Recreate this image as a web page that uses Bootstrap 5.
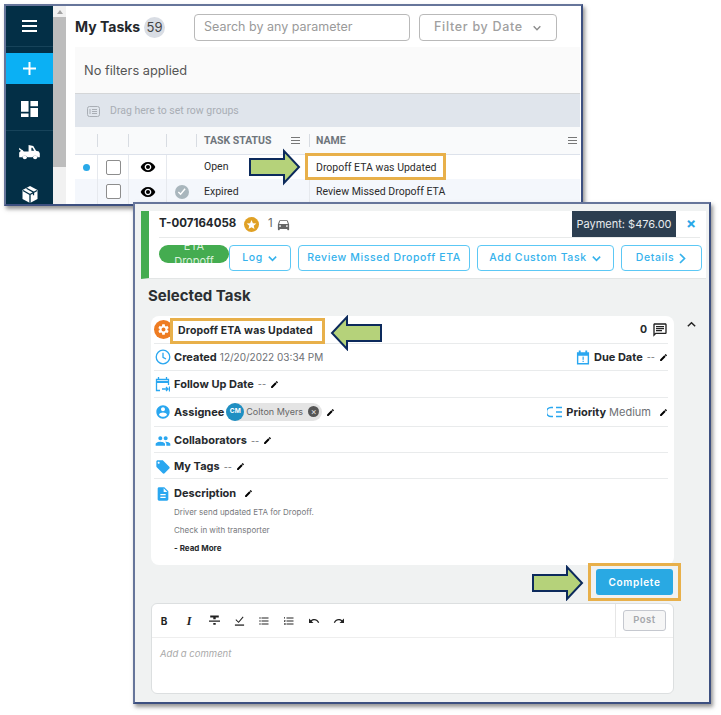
<!DOCTYPE html>
<html lang="en">
<head>
    <meta charset="UTF-8">
    <meta name="viewport" content="width=device-width, initial-scale=1.0">
    <title>My Tasks</title>
    <link href="https://cdn.jsdelivr.net/npm/bootstrap@5.3.0/dist/css/bootstrap.min.css" rel="stylesheet">
    <style>
        html, body { height: 100%; }
        body { background: #fff; position: relative; overflow: hidden; font-family: Inter, "Liberation Sans", sans-serif; color: #23272b; }
        svg { display: block; flex: none; }
        .shot { position: absolute; background: #fff; border: 2px solid #66759a; border-right-color: #3d5080; border-bottom-color: #3d5080; box-shadow: 2px 3px 4px rgba(60,60,60,.55); overflow: hidden; }
        .shot-tasks { left: 4px; top: 4px; width: 579px; height: 202px; z-index: 1; }
        .shot-detail { left: 133px; top: 202px; width: 578px; height: 502px; z-index: 2; background: #f0f2f2; }

        /* left menu */
        .side { width: 47px; background: #032f46; flex: none; }
        .side-item { display: flex; align-items: center; justify-content: center; border-bottom: 1px solid #17435a; }
        .side-menu { height: 41px; margin-bottom: 6px; }
        .side-add { height: 31px; background: #0bb0f4; border: 0; margin-bottom: 1px; }
        .side-dash { height: 46px; padding-top: 3px; }
        .side-truck { height: 42px; border: 0; }
        .side-box { height: 31px; border: 0; padding-top: 12px; }
        .scroll-track { width: 13px; background: #f1f1f1; flex: none; padding-top: 4px; }
        .scroll-arrow { width: 0; height: 0; margin: 0 auto 3px; border: 3px solid transparent; border-top: 0; border-bottom: 4px solid #a3a3a3; }
        .scroll-thumb { height: 150px; background: #bdbdbd; }
        .task-main { width: 514px; padding-left: 9px; flex: none; }

        .task-top { height: 41px; padding-top: 7px; }
        .task-title { font-size: 14px; font-weight: 700; width: 69px; height: 27px; white-space: nowrap; }
        .count-dot { width: 21px; height: 21px; border-radius: 50%; background: #d9dde4; font-size: 13px; color: #444; display: flex; align-items: center; justify-content: center; margin-right: 29px; }
        .search-box { width: 216px; height: 27px; margin-top: 1px; border: 1px solid #b9b9b9; border-radius: 4px; font-size: 12.5px; color: #9a9a9a; padding: 0 9px; margin-right: 9px; display: flex; align-items: center; }
        .date-box { width: 138px; height: 27px; margin-top: 1px; border: 1px solid #b9b9b9; border-radius: 4px; font-size: 12.5px; color: #a0a0a0; padding: 0 14px; display: flex; align-items: center; justify-content: space-between; font-weight: 500; letter-spacing: .7px; }
        .filter-strip { height: 46px; background: #fafafa; font-size: 12.8px; color: #555; padding: 2px 9px 0; display: flex; align-items: center; width: 505px; }
        .group-bar { height: 34px; background: #e0e5ec; border-top: 1px solid #d4d6d8; width: 505px; font-family: Roboto, sans-serif; font-size: 10.5px; color: #a9aeb5; padding: 1px 0 0 12px; gap: 10px; display: flex; align-items: center; }
        .grid-row { display: flex; width: 505px; font-family: Roboto, sans-serif; font-size: 10.5px; color: #2c2c2c; }
        .grid-head { height: 28px; background: #f9fafb; border-bottom: 1px solid #dde2eb; color: #6f757b; font-weight: 700; }
        .grid-open { height: 24px; background: #fff; }
        .grid-expired { height: 25px; background: #f4f7fc; }
        .cell { display: flex; align-items: center; flex: none; border-left: 1px solid #e6e9ee; }
        .grid-head .cell { border-left-color: transparent; position: relative; }
        .grid-head .cell + .cell::before { content: ""; position: absolute; left: -1px; top: 7px; height: 13px; width: 1px; background: #d8dce2; }
        .c1 { width: 22px; border-left: 0; justify-content: center; }
        .c2 { width: 31px; justify-content: center; }
        .c3 { width: 38px; justify-content: center; }
        .c4 { width: 30px; justify-content: center; }
        .c5 { width: 113px; padding: 0 9px 0 7px; justify-content: space-between; }
        .c6 { width: 271px; padding: 0 3px 0 6px; justify-content: space-between; }
        .grid-open .c5, .grid-expired .c5 { border-left-color: transparent; }
        .unread { width: 7px; height: 7px; border-radius: 50%; background: #29a9e8; }
        .fake-check { width: 15px; height: 15px; border: 1px solid #8d8d8d; border-radius: 2px; background: #fff; }
        .done-dot { width: 14px; height: 14px; border-radius: 50%; background: #a9b6bd; display: flex; align-items: center; justify-content: center; }
        .head-lines { width: 9px; height: 7px; border-top: 1px solid #777; border-bottom: 1px solid #777; position: relative; }
        .head-lines::after { content: ""; position: absolute; left: 0; right: 0; top: 2px; height: 1px; background: #777; }

        /* callouts */
        .hilite { border: 3px solid #e8b04a; background: #fff; }
        .hilite-name { position: absolute; left: 299px; top: 147px; width: 141px; height: 27px; z-index: 1; font-family: Roboto, sans-serif; font-size: 10.5px; color: #2c2c2c; padding: 2px 0 0 8px; display: flex; align-items: center; }
        .arrow { position: absolute; z-index: 3; }

        /* detail window */
        .head-card { margin: 7px 3px 0 6px; height: 68px; background: #fff; border-left: 8px solid #44ac50; padding-left: 10px; border-bottom: 1px solid #e3e6e6; position: relative; }
        .head-top { height: 27px; border-bottom: 1px solid #e8eaea; margin-right: 6px; }
        .task-no { font-size: 11.5px; font-weight: 700; width: 85px; white-space: nowrap; }
        .star-dot { width: 15px; height: 15px; border-radius: 50%; background: #e0a125; display: flex; align-items: center; justify-content: center; margin-right: 9px; }
        .car-num { font-size: 11.5px; color: #666; margin-right: 3px; }
        .pay-box { position: absolute; left: 423px; top: 0; width: 104px; height: 26px; background: #2c3e50; color: #e8ebee; font-size: 11px; display: flex; align-items: center; justify-content: center; white-space: nowrap; }
        .close-x { position: absolute; left: 537px; top: 5px; font-size: 15px; line-height: 16px; font-weight: 700; color: #2aa7e8; }
        .head-btns { padding-top: 7px; gap: 7px; }
        .eta-pill { width: 70px; height: 18px; border-radius: 9px; background: #44ac50; color: #d9f0dc; font-size: 11px; line-height: 15px; text-align: center; overflow: hidden; margin-right: -7px; flex: none; display: flex; align-items: center; justify-content: center; }
        .btn-line { height: 26px; border: 1px solid #5cc8f5; border-radius: 4px; background: #fff; color: #35b2ec; font-size: 10.5px; font-weight: 500; letter-spacing: .6px; display: flex; align-items: center; justify-content: center; gap: 4px; flex: none; padding: 0; white-space: nowrap; }
        .w-log { width: 62px; }
        .w-review { width: 172px; }
        .w-custom { width: 137px; }
        .w-details { width: 81px; }
        .sel-title { font-size: 15px; font-weight: 700; color: #2b2f33; margin: 4px 0 7px 13px; height: 26px; }
        .body-wrap { padding-left: 16px; }
        .info-card { width: 523px; height: 249px; background: #fff; border-radius: 8px; padding: 0 6px 0 3px; flex: none; }
        .collapse-up { width: 34px; padding-top: 3px; }
        .info-row { border-bottom: 1px solid #e9ebec; font-size: 11px; font-weight: 700; color: #26292c; white-space: nowrap; padding-left: 1px; }
        .r1 { height: 28px; position: relative; }
        .r2 { height: 27px; }
        .r3 { height: 27px; }
        .r4 { height: 29px; }
        .r5 { height: 26px; padding-top: 2px; }
        .r6 { height: 26px; padding-top: 2px; }
        .r7 { height: 27px; font-size: 11px; font-weight: 700; color: #26292c; padding: 2px 0 0 1px; }
        .info-ico { width: 15px; margin-right: 4px; display: flex; justify-content: center; }
        .val { font-weight: 400; color: #6d6f74; margin-left: 3px; }
        .val-date { font-size: 10px; }
        .val-dash { font-size: 9px; margin-left: 4px; }
        .pen { margin-left: 4px; }
        .gear-dot { width: 19px; height: 19px; border-radius: 50%; background: #ee7c22; display: flex; align-items: center; justify-content: center; margin-left: -1px; flex: none; }
        .hilite-task { position: absolute; left: 16px; top: 2px; width: 155px; height: 26px; z-index: 1; font-size: 10.5px; padding-left: 5px; display: flex; align-items: center; letter-spacing: .15px; }
        .cnt { font-size: 10.5px; margin-right: 1px; }
        .person-chip { display: flex; align-items: center; background: #e4e4e4; border-radius: 10px; height: 18px; width: 96px; margin-left: 2px; font-weight: 400; font-size: 9px; color: #666; position: relative; }
        .person-av { width: 18px; height: 18px; border-radius: 50%; background: #1f8fc2; color: #fff; font-size: 6.5px; font-weight: 700; display: flex; align-items: center; justify-content: center; margin-right: 2px; flex: none; }
        .chip-x { position: absolute; right: 3px; top: 3px; width: 11px; height: 11px; border-radius: 50%; background: #555; color: #e4e4e4; font-size: 9px; line-height: 11px; text-align: center; }
        .desc-block { padding: 1px 0 0 20px; font-size: 8px; color: #77797d; }
        .desc-block p { margin: 0 0 8px; line-height: 10px; }
        .read-more { font-weight: 700; color: #26292c; }
        .finish-row { height: 38px; position: relative; }
        .hilite-done { position: absolute; left: 453px; top: -2px; width: 93px; height: 38px; display: flex; align-items: center; justify-content: center; background: #f0f2f2; }
        .btn-done { width: 77px; height: 26px; background: #29a9e3; border: 0; border-radius: 3px; color: #fff; font-size: 10px; font-weight: 600; letter-spacing: .7px; padding: 0; }
        .comment-box { margin-left: 16px; width: 523px; height: 91px; background: #fff; border: 1px solid #dcdfe0; border-radius: 6px; flex: none; }
        .tool-row { height: 34px; border-bottom: 1px solid #eeeeee; padding-left: 5px; gap: 11px; }
        .tool-ico { width: 14px; display: flex; justify-content: center; font-size: 10px; font-weight: 700; color: #222; line-height: 14px; }
        .tool-serif { font-family: "Liberation Serif", serif; font-size: 12px; font-style: italic; }
        .post-wrap { border-left: 1px solid #e6e6e6; height: 33px; width: 58px; margin-left: auto; display: flex; align-items: center; padding-left: 7px; }
        .post-btn { width: 43px; height: 21px; border: 1px solid #c5c8cf; border-radius: 3px; background: #f6f6f6; color: #a5a7ac; font-size: 9.5px; font-weight: 600; letter-spacing: .5px; padding: 0; }
        .comment-hint { font-size: 9.5px; font-style: italic; color: #a9a9a9; padding: 9px 0 0 8px; }
    </style>
</head>
<body>
    <svg width="0" height="0" class="position-absolute">
        <symbol id="i-pen" viewBox="0 0 24 24"><path d="M3 17.25V21h3.75L17.81 9.94l-3.75-3.75L3 17.25zM20.71 7.04a1 1 0 0 0 0-1.41l-2.34-2.34a1 1 0 0 0-1.41 0l-1.83 1.83 3.75 3.75 1.83-1.83z"/></symbol>
        <symbol id="i-eye" viewBox="0 0 24 24"><path d="M12 4.5C7 4.5 2.73 7.61 1 12c1.73 4.39 6 7.5 11 7.5s9.27-3.11 11-7.5c-1.73-4.39-6-7.5-11-7.5zM12 17c-2.76 0-5-2.24-5-5s2.24-5 5-5 5 2.24 5 5-2.24 5-5 5zm0-8c-1.66 0-3 1.34-3 3s1.34 3 3 3 3-1.34 3-3-1.34-3-3-3z"/></symbol>
        <symbol id="i-down" viewBox="0 0 12 12"><path d="M2 4l4 4 4-4" fill="none" stroke="currentColor" stroke-width="1.7"/></symbol>
    </svg>

    <!-- back window: task list -->
    <div class="shot shot-tasks d-flex">
        <div class="side">
            <div class="side-item side-menu">
                <svg width="15" height="12" viewBox="0 0 15 12" fill="#fff"><rect width="15" height="2"/><rect y="5" width="15" height="2"/><rect y="10" width="15" height="2"/></svg>
            </div>
            <div class="side-item side-add">
                <svg width="13" height="13" viewBox="0 0 13 13" fill="#fff"><rect x="5.5" width="2" height="13"/><rect y="5.5" width="13" height="2"/></svg>
            </div>
            <div class="side-item side-dash">
                <svg width="17" height="16" viewBox="3 3 18 18" preserveAspectRatio="none" fill="#fff"><path d="M3 15h8V3H3v12zm0 6h8v-4H3v4zm10 0h8V11h-8v10zm0-18v6h8V3h-8z"/></svg>
            </div>
            <div class="side-item side-truck">
                <svg width="21" height="15" viewBox="0 0 22 16" fill="#fff"><path d="M10 0l5 1 3 5 3 1 1 2v4h-2.200a3 3 0 0 0-5.600 0H8.800a3 3 0 0 0-5.600 0H0V8l3-3 2 2h5z"/><path d="M13 3v3h3l-1.800-3z" fill="#032f46"/><circle cx="6" cy="13" r="2.200"/><circle cx="17" cy="13" r="2.200"/><path d="M0 3l4 3-1 1-3-2z"/></svg>
            </div>
            <div class="side-item side-box">
                <svg width="18" height="19" viewBox="0 0 18 19"><path d="M9 1l7.500 4v9L9 18l-7.500-4V5z" fill="#fff"/><path d="M2 5.500L9 9.500l7-4M9 9.500V18M5.500 3.200l7 4v3" fill="none" stroke="#032f46" stroke-width="1.300"/></svg>
            </div>
        </div>
        <div class="scroll-track">
            <div class="scroll-arrow"></div>
            <div class="scroll-thumb"></div>
        </div>
        <div class="task-main position-relative">
            <div class="task-top d-flex align-items-start">
                <div class="task-title d-flex align-items-center">My Tasks</div>
                <div class="count-dot mt-1">59</div>
                <div class="search-box">Search by any parameter</div>
                <div class="date-box">Filter by Date <svg width="10" height="10" style="color:#8c8c8c"><use href="#i-down"/></svg></div>
            </div>
            <div class="filter-strip">No filters applied</div>
            <div class="group-bar">
                <svg width="13" height="13" viewBox="0 0 13 13" fill="none" stroke="#a9aeb5"><rect x=".5" y="1.500" width="12" height="10" rx="2"/><path d="M5 4.500h5M5 6.500h5M5 8.500h5M3 4v5"/></svg>
                Drag here to set row groups
            </div>
            <div class="grid-row grid-head">
                <div class="cell c1"></div><div class="cell c2"></div><div class="cell c3"></div><div class="cell c4"></div>
                <div class="cell c5">TASK STATUS <span class="head-lines"></span></div>
                <div class="cell c6">NAME <span class="head-lines"></span></div>
            </div>
            <div class="grid-row grid-open">
                <div class="cell c1"><span class="unread"></span></div>
                <div class="cell c2"><span class="fake-check"></span></div>
                <div class="cell c3"><svg width="16" height="16"><use href="#i-eye"/></svg></div>
                <div class="cell c4"></div>
                <div class="cell c5">Open</div>
                <div class="cell c6"></div>
            </div>
            <div class="grid-row grid-expired">
                <div class="cell c1"></div>
                <div class="cell c2"><span class="fake-check"></span></div>
                <div class="cell c3"><svg width="16" height="16"><use href="#i-eye"/></svg></div>
                <div class="cell c4"><span class="done-dot"><svg width="9" height="9" viewBox="0 0 10 10"><path d="M1.500 5.500l2.500 2.500 5-6" fill="none" stroke="#fff" stroke-width="1.600"/></svg></span></div>
                <div class="cell c5">Expired</div>
                <div class="cell c6">Review Missed Dropoff ETA</div>
            </div>
        </div>
        <div class="hilite hilite-name">Dropoff ETA was Updated</div>
    </div>

    <!-- front window: task details -->
    <div class="shot shot-detail">
        <div class="head-card">
            <div class="head-top d-flex align-items-center">
                <span class="task-no">T-007164058</span>
                <span class="star-dot"><svg width="11" height="11" viewBox="0 0 24 24" fill="#fff"><path d="M12 2l3 7 7.500.6-5.700 4.900 1.800 7.300L12 18l-6.600 3.800 1.800-7.300L1.500 9.600 9 9z"/></svg></span>
                <span class="car-num">1</span>
                <svg width="15" height="15" viewBox="0 0 24 24" fill="#666"><path d="M18.920 6.010C18.720 5.420 18.160 5 17.500 5h-11c-.66 0-1.210.42-1.420 1.010L3 12v8c0 .55.45 1 1 1h1c.55 0 1-.45 1-1v-1h12v1c0 .55.45 1 1 1h1c.55 0 1-.45 1-1v-8l-2.080-5.990zM6.500 16c-.83 0-1.500-.67-1.500-1.500S5.670 13 6.500 13s1.500.67 1.500 1.500S7.330 16 6.500 16zm11 0c-.83 0-1.500-.67-1.500-1.500s.67-1.500 1.500-1.500 1.500.67 1.500 1.500-.67 1.500-1.500 1.500zM5 11l1.500-4.500h11L19 11H5z"/></svg>
            </div>
            <div class="pay-box">Payment: $476.00</div>
            <div class="close-x">×</div>
            <div class="head-btns d-flex">
                <div class="eta-pill">ETA<br>Dropoff</div>
                <button class="btn-line w-log">Log <svg width="11" height="11"><use href="#i-down"/></svg></button>
                <button class="btn-line w-review">Review Missed Dropoff ETA</button>
                <button class="btn-line w-custom">Add Custom Task <svg width="11" height="11"><use href="#i-down"/></svg></button>
                <button class="btn-line w-details">Details <svg width="9" height="11" viewBox="0 0 9 11"><path d="M2 1l4.500 4.500L2 10" fill="none" stroke="currentColor" stroke-width="1.700"/></svg></button>
            </div>
        </div>
        <div class="sel-title d-flex align-items-center">Selected Task</div>
        <div class="d-flex body-wrap">
            <div class="info-card">
                <div class="info-row r1 d-flex align-items-center justify-content-between">
                    <span class="gear-dot"><svg width="13" height="13" viewBox="0 0 24 24" fill="#fff"><path d="M19.140 12.940c.04-.3.06-.61.06-.94 0-.32-.02-.64-.07-.94l2.030-1.580c.18-.14.23-.41.12-.61l-1.920-3.320c-.12-.22-.37-.29-.59-.22l-2.390.96c-.5-.38-1.030-.7-1.620-.94l-.36-2.540c-.04-.24-.24-.41-.48-.41h-3.840c-.24 0-.43.17-.47.41l-.36 2.540c-.59.24-1.130.57-1.620.94l-2.390-.96c-.22-.08-.47 0-.59.22L2.740 8.870c-.12.21-.08.47.12.61l2.030 1.580c-.05.3-.09.63-.09.94s.02.64.07.94l-2.030 1.580c-.18.14-.23.41-.12.61l1.920 3.320c.12.22.37.29.59.22l2.390-.96c.5.38 1.030.7 1.620.94l.36 2.540c.05.24.24.41.48.41h3.840c.24 0 .44-.17.47-.41l.36-2.540c.59-.24 1.130-.56 1.620-.94l2.390.96c.22.08.47 0 .59-.22l1.920-3.320c.12-.22.07-.47-.12-.61l-2.010-1.580zM12 15.600c-1.980 0-3.600-1.620-3.600-3.600s1.620-3.600 3.600-3.600 3.600 1.620 3.600 3.600-1.620 3.600-3.600 3.600z"/></svg></span>
                    <span class="hilite hilite-task">Dropoff ETA was Updated</span>
                    <span class="d-flex align-items-center gap-1"><span class="cnt">0</span><svg width="16" height="16" viewBox="0 0 24 24" fill="#222"><path d="M20 2H4c-1.100 0-2 .9-2 2v18l4-4h14c1.100 0 2-.9 2-2V4c0-1.100-.9-2-2-2zm0 14H5.170L4 17.170V4h16v12zM6 12h9v2H6zm0-3h12v2H6zm0-3h12v2H6z"/></svg></span>
                </div>
                <div class="info-row r2 d-flex align-items-center justify-content-between">
                    <span class="d-flex align-items-center"><span class="info-ico"><svg width="16" height="16" viewBox="0 0 16 16" fill="none" stroke="#2aa7f0" stroke-width="1.300"><circle cx="8" cy="8" r="6.800"/><path d="M8 3.800V8.300l3 1.700"/></svg></span>Created <span class="val val-date">12/20/2022 03:34 PM</span></span>
                    <span class="d-flex align-items-center"><svg class="me-1" width="14" height="15" viewBox="0 0 15 15" fill="#2aa7f0"><path d="M1 2h2V0h2v2h5V0h2v2h2v13H1zm1.500 3.500v8h10v-8z"/><rect x="7" y="6.500" width="1.300" height="3.500"/><rect x="7" y="11" width="1.300" height="1.300"/></svg>Due Date <span class="val val-dash">--</span><svg class="pen" width="9" height="9"><use href="#i-pen"/></svg></span>
                </div>
                <div class="info-row r3 d-flex align-items-center">
                    <span class="info-ico"><svg width="15" height="15" viewBox="0 0 15 15" fill="none" stroke="#2aa7f0" stroke-width="1.300"><path d="M5 13.500H1.500v-11h12V8M3.500 0v3M11.500 0v3"/><path d="M1.500 5h12" stroke-width="2"/><path d="M7 12h6M11 10l2 2-2 2M14.500 9.500v5"/></svg></span>Follow Up Date <span class="val val-dash">--</span><svg class="pen" width="9" height="9"><use href="#i-pen"/></svg>
                </div>
                <div class="info-row r4 d-flex align-items-center justify-content-between">
                    <span class="d-flex align-items-center"><span class="info-ico"><svg width="16" height="16" viewBox="0 0 24 24" fill="#2aa7f0"><path d="M12 2C6.480 2 2 6.480 2 12s4.480 10 10 10 10-4.480 10-10S17.520 2 12 2zm0 3c1.660 0 3 1.340 3 3s-1.340 3-3 3-3-1.340-3-3 1.340-3 3-3zm0 14.200c-2.500 0-4.710-1.280-6-3.220.03-1.990 4-3.080 6-3.080 1.990 0 5.970 1.090 6 3.080-1.290 1.940-3.500 3.220-6 3.220z"/></svg></span>Assignee
                        <span class="person-chip"><span class="person-av">CM</span>Colton Myers<span class="chip-x">×</span></span><svg class="pen" width="9" height="9"><use href="#i-pen"/></svg></span>
                    <span class="d-flex align-items-center"><svg class="me-1" width="15" height="12" viewBox="0 0 15 12" fill="none" stroke="#2aa7f0" stroke-width="1.500"><path d="M6 1.500H4a4.500 4.500 0 0 0 0 9h2M9 1.500h6M9 6h6M9 10.500h6"/></svg>Priority <span class="val">Medium</span><svg class="pen ms-2" width="9" height="9"><use href="#i-pen"/></svg></span>
                </div>
                <div class="info-row r5 d-flex align-items-center">
                    <span class="info-ico"><svg width="16" height="16" viewBox="0 0 24 24" fill="#2aa7f0"><path d="M16 11c1.660 0 2.990-1.340 2.990-3S17.660 5 16 5c-1.660 0-3 1.340-3 3s1.340 3 3 3zm-8 0c1.660 0 2.990-1.340 2.990-3S9.660 5 8 5C6.340 5 5 6.340 5 8s1.340 3 3 3zm0 2c-2.330 0-7 1.170-7 3.500V19h14v-2.500c0-2.330-4.670-3.500-7-3.500zm8 0c-.29 0-.62.02-.97.05 1.160.84 1.970 1.970 1.970 3.450V19h6v-2.500c0-2.330-4.670-3.500-7-3.500z"/></svg></span>Collaborators <span class="val val-dash">--</span><svg class="pen" width="9" height="9"><use href="#i-pen"/></svg>
                </div>
                <div class="info-row r6 d-flex align-items-center">
                    <span class="info-ico"><svg width="16" height="16" viewBox="0 0 24 24" fill="#2aa7f0"><path d="M21.410 11.580l-9-9C12.050 2.220 11.550 2 11 2H4c-1.100 0-2 .9-2 2v7c0 .55.22 1.050.59 1.420l9 9c.36.36.86.58 1.410.58.55 0 1.050-.22 1.410-.59l7-7c.37-.36.59-.86.59-1.410 0-.55-.23-1.060-.59-1.420zM5.500 7C4.670 7 4 6.330 4 5.500S4.670 4 5.500 4 7 4.670 7 5.500 6.330 7 5.500 7z"/></svg></span>My Tags <span class="val val-dash">--</span><svg class="pen" width="9" height="9"><use href="#i-pen"/></svg>
                </div>
                <div class="r7 d-flex align-items-center">
                    <span class="info-ico"><svg width="16" height="16" viewBox="0 0 24 24" fill="#2aa7f0"><path d="M14 2H6c-1.100 0-1.990.9-1.990 2L4 20c0 1.100.89 2 1.990 2H18c1.100 0 2-.9 2-2V8l-6-6zm2 16H8v-2h8v2zm0-4H8v-2h8v2zm-3-5V3.500L18.500 9H13z"/></svg></span>Description<svg class="ms-2" width="9" height="9"><use href="#i-pen"/></svg>
                </div>
                <div class="desc-block">
                    <p>Driver send updated ETA for Dropoff.</p>
                    <p>Check in with transporter</p>
                    <p class="read-more">- Read More</p>
                </div>
            </div>
            <div class="collapse-up d-flex justify-content-center">
                <svg width="11" height="11" viewBox="0 0 12 12"><path d="M2 8l4-4 4 4" fill="none" stroke="#222" stroke-width="1.600"/></svg>
            </div>
        </div>
        <div class="finish-row">
            <div class="hilite hilite-done"><button class="btn-done">Complete</button></div>
        </div>
        <div class="comment-box">
            <div class="tool-row d-flex align-items-center">
                <span class="tool-ico">B</span>
                <span class="tool-ico tool-serif">I</span>
                <span class="tool-ico"><svg width="11" height="11" viewBox="3 3 18 18" fill="#222"><path d="M10 19h4v-3h-4v3zM5 4v3h5v3h4V7h5V4H5zM3 14h18v-2H3v2z"/></svg></span>
                <span class="tool-ico"><svg width="11" height="11" viewBox="0 0 12 12" fill="none" stroke="#222"><path d="M2 5l3 3 5-6" stroke-width="1.100"/><path d="M1 11h10" stroke-width="1.400"/></svg></span>
                <span class="tool-ico"><svg width="12" height="12" viewBox="0 0 24 24" fill="#222"><path d="M4 10.500c-.83 0-1.500.67-1.500 1.500s.67 1.500 1.500 1.500 1.500-.67 1.500-1.500-.67-1.500-1.500-1.500zm0-6c-.83 0-1.500.67-1.500 1.500S3.170 7.500 4 7.500 5.500 6.830 5.500 6 4.830 4.500 4 4.500zm0 12c-.83 0-1.500.68-1.500 1.500s.68 1.500 1.500 1.500 1.500-.68 1.500-1.500-.67-1.500-1.500-1.500zM7 19h14v-2H7v2zm0-6h14v-2H7v2zm0-8v2h14V5H7z"/></svg></span>
                <span class="tool-ico"><svg width="12" height="12" viewBox="0 0 24 24" fill="#222"><path d="M2 17h2v.5H3v1h1v.5H2v1h3v-4H2v1zm1-9h1V4H2v1h1v3zm-1 3h1.800L2 13.100v.9h3v-1H3.200L5 10.900V10H2v1zm5-6v2h14V5H7zm0 14h14v-2H7v2zm0-6h14v-2H7v2z"/></svg></span>
                <span class="tool-ico"><svg width="12" height="12" viewBox="0 0 24 24" fill="#222"><path d="M12.500 8c-2.650 0-5.050.99-6.900 2.600L2 7v9h9l-3.620-3.620c1.390-1.160 3.160-1.880 5.120-1.880 3.540 0 6.550 2.310 7.600 5.500l2.370-.78C21.080 11.030 17.150 8 12.500 8z"/></svg></span>
                <span class="tool-ico"><svg width="12" height="12" viewBox="0 0 24 24" fill="#222"><path d="M18.400 10.600C16.550 8.990 14.150 8 11.500 8c-4.650 0-8.580 3.030-9.960 7.220L3.900 16c1.050-3.190 4.050-5.500 7.600-5.500 1.950 0 3.730.72 5.120 1.880L13 16h9V7l-3.600 3.600z"/></svg></span>
                <div class="post-wrap"><button class="post-btn">Post</button></div>
            </div>
            <div class="comment-hint">Add a comment</div>
        </div>
    </div>

    <!-- callout arrows -->
    <svg class="arrow" style="left:248px;top:148px" width="54" height="38" viewBox="0 0 54 38"><path d="M2 11h34V3l15 16-15 16v-8H2z" fill="#b5d27a" stroke="#0c2a5c" stroke-width="2"/></svg>
    <svg class="arrow" style="left:329px;top:315px" width="54" height="36" viewBox="0 0 54 36"><path d="M52 10H18V2L3 18l15 16v-8h34z" fill="#b5d27a" stroke="#0c2a5c" stroke-width="2"/></svg>
    <svg class="arrow" style="left:531px;top:565px" width="54" height="36" viewBox="0 0 54 36"><path d="M2 10h34V2l15 16-15 16v-8H2z" fill="#b5d27a" stroke="#0c2a5c" stroke-width="2"/></svg>
</body>
</html>
